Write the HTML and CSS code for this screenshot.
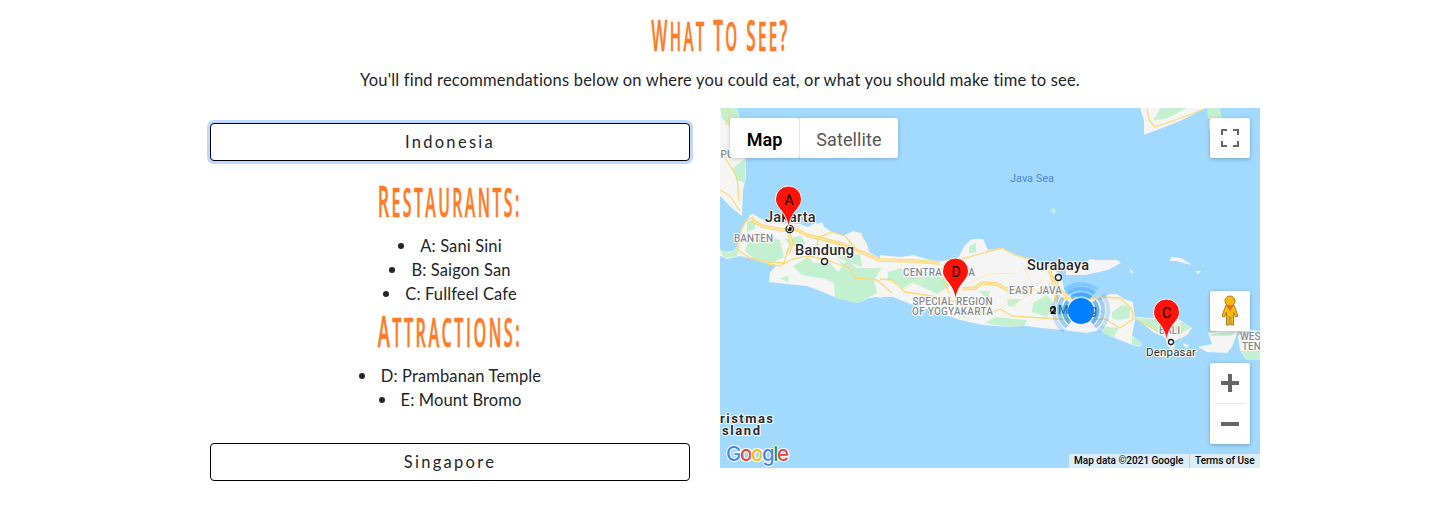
FILE: index.html
```html
<!DOCTYPE html>
<html lang="en">
<head>
<meta charset="utf-8">
<title>What To See?</title>
<link rel="stylesheet" href="styles.css">
</head>
<body>
<main class="container">
  <h2 class="heading"><span class="title">W<small>hat</small> T<small>o</small> S<small>ee</small>?</span></h2>
  <p class="intro">You'll find recommendations below on where you could eat, or what you should make time to see.</p>
  <div class="columns">
    <section class="places">
      <button class="country focused">Indonesia</button>
      <div class="details">
        <h2 class="heading"><span class="restaurants">R<small>estaurants:</small></span></h2>
        <ul>
          <li>A: Sani Sini</li>
          <li>B: Saigon San</li>
          <li>C: Fullfeel Cafe</li>
        </ul>
        <h2 class="heading"><span class="attractions">A<small>ttractions:</small></span></h2>
        <ul>
          <li>D: Prambanan Temple</li>
          <li>E: Mount Bromo</li>
        </ul>
      </div>
      <button class="country singapore">Singapore</button>
    </section>
    <section class="map">
      <svg class="canvas" width="540" height="360" viewBox="720 108 540 360">
        <defs>
          <path id="pin" d="M0 0C-1-9-4-14-9-20C-12-24-13-26-13-29.500A13 13 0 0 1 13-29.500C13-26 12-24 9-20C4-14 1-9 0 0Z"/>
        </defs>
        <rect x="720" y="108" width="540" height="360" fill="#a1d9ff"/>
        <g class="land">
          <path d="M720 108H737L742 125L746 155L746 178L743 190L742 216L732 208L720 196Z"/>
          <path d="M720 250L728 252L735 250L740 241L742 229L746 222L750 215L753 214L763 220L780 223L800 224L808 227L815 223L822 225L830 231L843 236L853 231L860 233L867 244L869 252L880 258L880 255L900 257L913 255L930 260L943 261L958 258L965 245L972 239L983 239L988 250L1002 248L1017 255L1027 258L1050 268L1061 274L1065 293L1080 298L1100 300L1109 294L1117 294L1124 299L1133 302L1135 320L1132 335L1142 344L1139 347L1132 345L1115 338L1100 330L1087 333L1063 330L1040 328L1020 325L1010 327L983 325L960 320L940 313L913 305L893 297L880 297L887 300L877 297L869 298L858 303L837 298L823 292L807 286L787 284L769 282L770 272L777 265L768 264L753 259L740 256L727 259L720 256Z"/>
          <path d="M1066 270L1085 263L1090 259L1097 260L1117 260L1121 263L1108 270L1085 275L1066 275Z"/>
          <path d="M1135 317L1153 318L1177 318L1192 328L1187 335L1174 341L1175 347L1171 350L1167 345L1167 338L1153 332Z"/>
          <path d="M1198 347L1212 344L1208 333L1222 330L1238 331L1232 347L1227 353L1207 352Z"/>
          <path d="M1238 336L1250 329L1260 332V360H1247L1240 352Z"/>
          <path d="M1140 108L1144 120V135L1180 121L1206 108ZM1209 120H1214L1209 131Z"/>
          <path d="M1170 261L1171 257L1181 258L1192 265L1183 263L1176 261ZM1195 271L1201 271L1198 274ZM1129 268L1133 272L1131 274ZM1182 343L1189 345L1187 349ZM738 188L743 190L742 196ZM817 224L822 222L824 227Z"/>
        </g>
        <g class="green">
          <path d="M720 108H737L740 120L731 128L722 118ZM733 168L746 158L745 183L737 180L732 170Z"/>
          <path d="M720 249L729 253L739 246L737 256L724 258ZM747 222L756 219L755 229L747 232ZM748 242L760 236L780 240L784 257L769 264L756 260L745 251ZM780 279L788 275L789 282ZM793 266L808 257L814 263L829 262L838 272L847 260L858 269L874 280L877 293L858 303L835 298L834 283L825 279L802 275ZM835 257L850 268L882 268L872 282L852 276ZM888 272L901 268L905 283L887 280ZM836 257L860 254L862 267ZM785 239L801 236L806 244L790 246Z"/>
          <path d="M889 276L902 269L913 282L902 289ZM900 276L920 270L949 278L950 286L937 294L918 285ZM969 246L976 243L976 252L969 254ZM979 291L990 291L988 300ZM1007 299L1021 299L1014 307L1008 306ZM1033 303L1047 295L1055 305L1047 317L1032 312ZM985 323L995 317L1027 320L1024 326L1010 327ZM954 308L971 312L965 318ZM1057 304L1075 307L1069 320L1058 315ZM1088 305L1102 311L1100 313ZM1100 326L1119 328L1113 338L1103 333ZM1132 336L1142 343L1139 346L1132 345ZM1112 312L1122 305L1131 307L1129 318L1118 320L1112 318ZM1138 318L1157 319L1169 328L1183 322L1191 328L1180 334L1159 333L1145 325ZM1211 334L1235 332L1231 336L1211 336ZM1241 351L1260 347V360L1247 360ZM1153 120L1161 108L1187 108L1166 119ZM1207 108H1220L1222 118L1208 119ZM1051 210L1054 208L1056 211L1053 214Z"/>
        </g>
        <path class="water" d="M1236 337L1241 352L1247 362H1226L1233 348ZM1240 352L1245 360L1252 361L1260 360V364H1236Z"/>
        <g class="roads thin">
          <path d="M720 149L727 161L737 177L739 201M720 190L730 196L740 211M727 108L731 115L725 125M739 234L745 222L753 217L752 222M739 234L738 250L750 258L767 262L784 263L788 248M767 264L780 266L793 259L809 256L830 261L849 268L855 278L877 280L892 293M815 239L832 232L845 236L858 251L880 260M818 239L817 247L807 250M880 279L892 280L905 292L925 295L943 298L960 303L986 315L1000 309L1012 316L1042 318L1075 320L1105 319L1120 328L1133 319L1132 309L1120 298L1102 297L1084 300L1062 298M962 259L986 252L1002 248L1012 254L1028 259M945 263L943 280L949 293M1135 318L1155 330L1166 336L1171 346M1058 280L1057 302M1147 109L1149 120L1155 127L1175 120L1205 109"/>
        </g>
        <g class="roads minor">
          <path d="M741 242L752 241L763 238L784 244M825 262L815 246M861 232L867 251M858 251L841 257M965 285L989 274L1017 273M1006 288L1012 306L1028 295L1043 278M1000 309L1012 298M936 267L922 280L904 289L886 280M1180 342L1189 328M1247 340L1256 344M1023 263L1034 290L1059 296"/>
        </g>
        <g class="roads wide"><path d="M753 221L762 226L783 230L793 228L807 235L842 244L861 252L880 260L914 261L940 263M962 289L975 288L982 283L997 284L1006 289L1033 289M788 230L792 243L788 254M1049 270L1055 285L1056 302M944 264L950 278L957 294M1053 284L1068 297"/></g>
        <g class="roads core"><path d="M753 221L762 226L783 230L793 228L807 235L842 244L861 252L880 260L914 261L940 263M962 289L975 288L982 283L997 284L1006 289L1033 289M788 230L792 243L788 254M1049 270L1055 285L1056 302M944 264L950 278L957 294M1053 284L1068 297"/></g>
        <g class="region">
          <text x="720.500" y="157.500">PU</text>
          <text x="734" y="241.500" textLength="39">BANTEN</text>
          <text x="903" y="275.500" textLength="72">CENTRAL JAVA</text>
          <text x="912.500" y="304.500" textLength="80">SPECIAL REGION</text>
          <text x="912" y="314.500" textLength="81">OF YOGYAKARTA</text>
          <text x="1009" y="293.500" textLength="53">EAST JAVA</text>
          <text x="1159" y="333.500" textLength="21">BALI</text>
          <text x="1240" y="339.500">WES</text>
          <text x="1242" y="349.500">TEN</text>
        </g>
        <text x="1010" y="181.500" class="sea" textLength="44">Java Sea</text>
        <g class="city">
          <text x="765" y="222" textLength="50.500">Jakarta</text>
          <text x="795" y="255" textLength="59">Bandung</text>
          <text x="1027" y="270" textLength="62">Surabaya</text>
          <text x="1146" y="356" class="town" textLength="50">Denpasar</text>
          <text x="1058" y="314" class="malang" textLength="39">Malang</text>
        </g>
        <g class="island"><text x="720" y="422.500" textLength="53">ristmas</text><text x="722" y="434.500" textLength="38">sland</text></g>
        <g fill="#fff" stroke="#202124" stroke-width="1.300">
          <circle cx="789.700" cy="229" r="3.700"/><circle cx="824.500" cy="261.500" r="3"/><circle cx="1058.400" cy="277.500" r="3"/><circle cx="1171" cy="342" r="2.500"/><circle cx="1053" cy="310" r="2.500"/>
        </g>
        <circle cx="789.700" cy="229" r="2.200"/>
        <g fill="none" stroke="#0080ff" stroke-width="4">
          <path stroke-opacity=".55" d="M1071 297.500A17 17 0 0 1 1091 297.500M1094 301A16 16 0 0 1 1092 323M1068 301A16 16 0 0 0 1070 323"/>
          <path stroke-opacity=".35" d="M1067.500 293.500A22 22 0 0 1 1094.500 293.500M1099 298A21 21 0 0 1 1095 327M1063 298A21 21 0 0 0 1067 327"/>
          <path stroke-opacity=".2" d="M1065 289.500A27 27 0 0 1 1097 289.500M1103 295A26 26 0 0 1 1098 331M1059 295A26 26 0 0 0 1064 331"/>
        </g>
        <circle cx="1081" cy="311" r="13" fill="#0080ff"/>
        <text x="1050" y="314" class="count">2</text>
        <g class="pins">
          <use href="#pin" x="788.500" y="228.500"/><use href="#pin" x="955.500" y="300.500"/><use href="#pin" x="1166.500" y="341.500"/>
          <text x="789" y="205">A</text><text x="956" y="277">D</text><text x="1166.500" y="318">C</text>
        </g>
        <text x="726" y="461" class="google" textLength="63"><tspan fill="#4285f4">G</tspan><tspan fill="#ea4335">o</tspan><tspan fill="#fbbc05">o</tspan><tspan fill="#4285f4">g</tspan><tspan fill="#0f9d58">l</tspan><tspan fill="#ea4335">e</tspan></text>
      </svg>
      <div class="overlay">
        <div class="types"><button class="type active">Map</button><button class="type">Satellite</button></div>
        <div class="controls">
          <button class="control"><svg width="18" height="18" fill="none" stroke="#666" stroke-width="2"><path d="M1 6V1H6M12 1H17V6M17 12V17H12M6 17H1V12"/></svg></button>
          <div class="lower">
            <button class="control"><svg width="20" height="32" viewBox="0 0 20 32"><path d="M6 10H14L18 21L15.500 22L13.500 17V30H10.800V22H9.200V30H6.500V17L4.500 22L2 21Z" fill="#fbbc05" stroke="#a77c2e"/><path d="M6.500 11H13.500L10 16Z" fill="#ef6c20"/><circle cx="10" cy="6" r="5" fill="#fbb807" stroke="#a77c2e"/></svg></button>
            <div class="zoom"><button><svg width="18" height="18"><path d="M7 0H11V7H18V11H11V18H7V11H0V7H7Z" fill="#666"/></svg></button><hr><button><svg width="18" height="18"><path d="M0 7H18V11H0Z" fill="#666"/></svg></button></div>
          </div>
        </div>
        <footer class="credits"><span class="data">Map data ©2021 Google</span><span class="terms">Terms of Use</span></footer>
      </div>
    </section>
  </div>
</main>
</body>
</html>
```
FILE: styles.css
```css
* { box-sizing: border-box; }
body { margin: 0; background: #fff; color: #212529; font: 16.5px/24px Lato, sans-serif; overflow: hidden; }
button { border: 0; background: #fff; padding: 0; font: inherit; color: inherit; }
.container { width: 1080px; margin: 0 auto; padding-top: 9px; text-align: center; }
.heading { display: flex; justify-content: center; margin: 0 0 8px; height: 50px; font: 600 44px/51px "Open Sans", sans-serif; color: #ff7b25; }
.heading span { flex: none; white-space: nowrap; letter-spacing: 6px; -webkit-text-stroke: .6px #ff7b25; transform: scaleX(.405); }
.heading .title { transform: scaleX(.388); }
.heading .attractions { transform: scaleX(.415); }
.heading small { font-size: 39px; text-transform: uppercase; }
.intro { margin: 0 0 16px; padding-top: 1px; letter-spacing: .185px; white-space: nowrap; }
.columns { display: grid; grid-template-columns: 540px 540px; }
.places { padding: 15px 30px 0; }
.country { display: block; width: 100%; height: 38px; padding-bottom: 1px; border: 1px solid #000; border-radius: 4px; letter-spacing: 2.3px; }
.focused { box-shadow: 0 0 0 3px #bfd8ff; }
.details { padding: 14px 0 32px; }
ul { list-style: none; margin: 0; padding: 0; }
li { display: flex; justify-content: center; align-items: center; height: 24px; padding-top: 2px; letter-spacing: .13px; }
li::before { content: ""; width: 6px; height: 6px; border-radius: 50%; background: #212529; margin-right: 16px; }
.map { display: grid; width: 540px; height: 360px; font-family: Roboto, sans-serif; }
.canvas, .overlay { grid-area: 1 / 1; min-height: 0; }
.canvas { display: block; }
.overlay { display: flex; justify-content: space-between; position: relative; padding: 10px; }
.land { fill: #f5f5f5; }
.green { fill: #c3f1d0; }
.water { fill: #a1d9ff; }
.roads { fill: none; stroke-linejoin: round; }
.thin { stroke: #fcd878; stroke-width: 1.3; }
.minor { stroke: #fde9b4; stroke-width: .8; }
.wide { stroke: #fbd36a; stroke-width: 3.4; }
.core { stroke: #ffe7a3; stroke-width: 1.8; }
.canvas text { paint-order: stroke; stroke: #fff; stroke-linejoin: round; stroke-width: 2px; }
.region text { font-size: 10px; font-weight: 500; fill: #858b94; }
.canvas .sea { font-size: 11px; fill: #4e87d8; stroke: none; }
.city text { font-size: 14.500px; font-weight: 500; fill: #28292c; }
.city .town { font-size: 11.500px; font-weight: 400; }
.city .malang { font-size: 12px; fill: #35679b; stroke: none; }
.island text { font-size: 13px; font-weight: 700; fill: #28292c; }
.canvas .count { font-size: 11px; font-weight: 700; stroke: none; }
.pins { fill: #ff1308; stroke: #fff; stroke-width: 1; }
.canvas .pins text { font-size: 14px; text-anchor: middle; fill: #000; stroke: none; }
.canvas .google { font: 500 20.5px Inter, sans-serif; stroke-width: 2px; }
.types { display: flex; height: 40px; box-shadow: 0 1px 4px #0003; border-radius: 2px; }
.types .type { width: 69px; font: 500 18px Roboto, sans-serif; padding-top: 2px; border-radius: 2px; color: #565656; }
.types .type + .type { width: 99px; border-left: 1px solid #e6e6e6; font-weight: 400; letter-spacing: .1px; }
.types .active { font-weight: 600; color: #000; }
.controls { display: flex; flex-direction: column; justify-content: space-between; padding-bottom: 14px; }
.control { display: grid; place-items: center; width: 40px; height: 40px; border-radius: 2px; box-shadow: 0 1px 4px #0004; }
.lower { display: grid; gap: 32px; }
.zoom { display: grid; grid-template-rows: 40px 1px 40px; background: #fff; border-radius: 2px; box-shadow: 0 1px 4px #0004; }
.zoom button { display: grid; place-items: center; background: none; }
.zoom hr { width: 30px; height: 1px; margin: 0 auto; border: 0; background: #e6e6e6; }
.credits { position: absolute; right: 0; bottom: 0; display: flex; height: 14px; font: 500 10px/14px Roboto, sans-serif; color: #000; white-space: nowrap; }
.credits span { background: #f5f5f5b3; padding: 0 5px; text-align: left; }
.data { width: 120px; margin-right: 1px; }
.terms { width: 70px; }
```
